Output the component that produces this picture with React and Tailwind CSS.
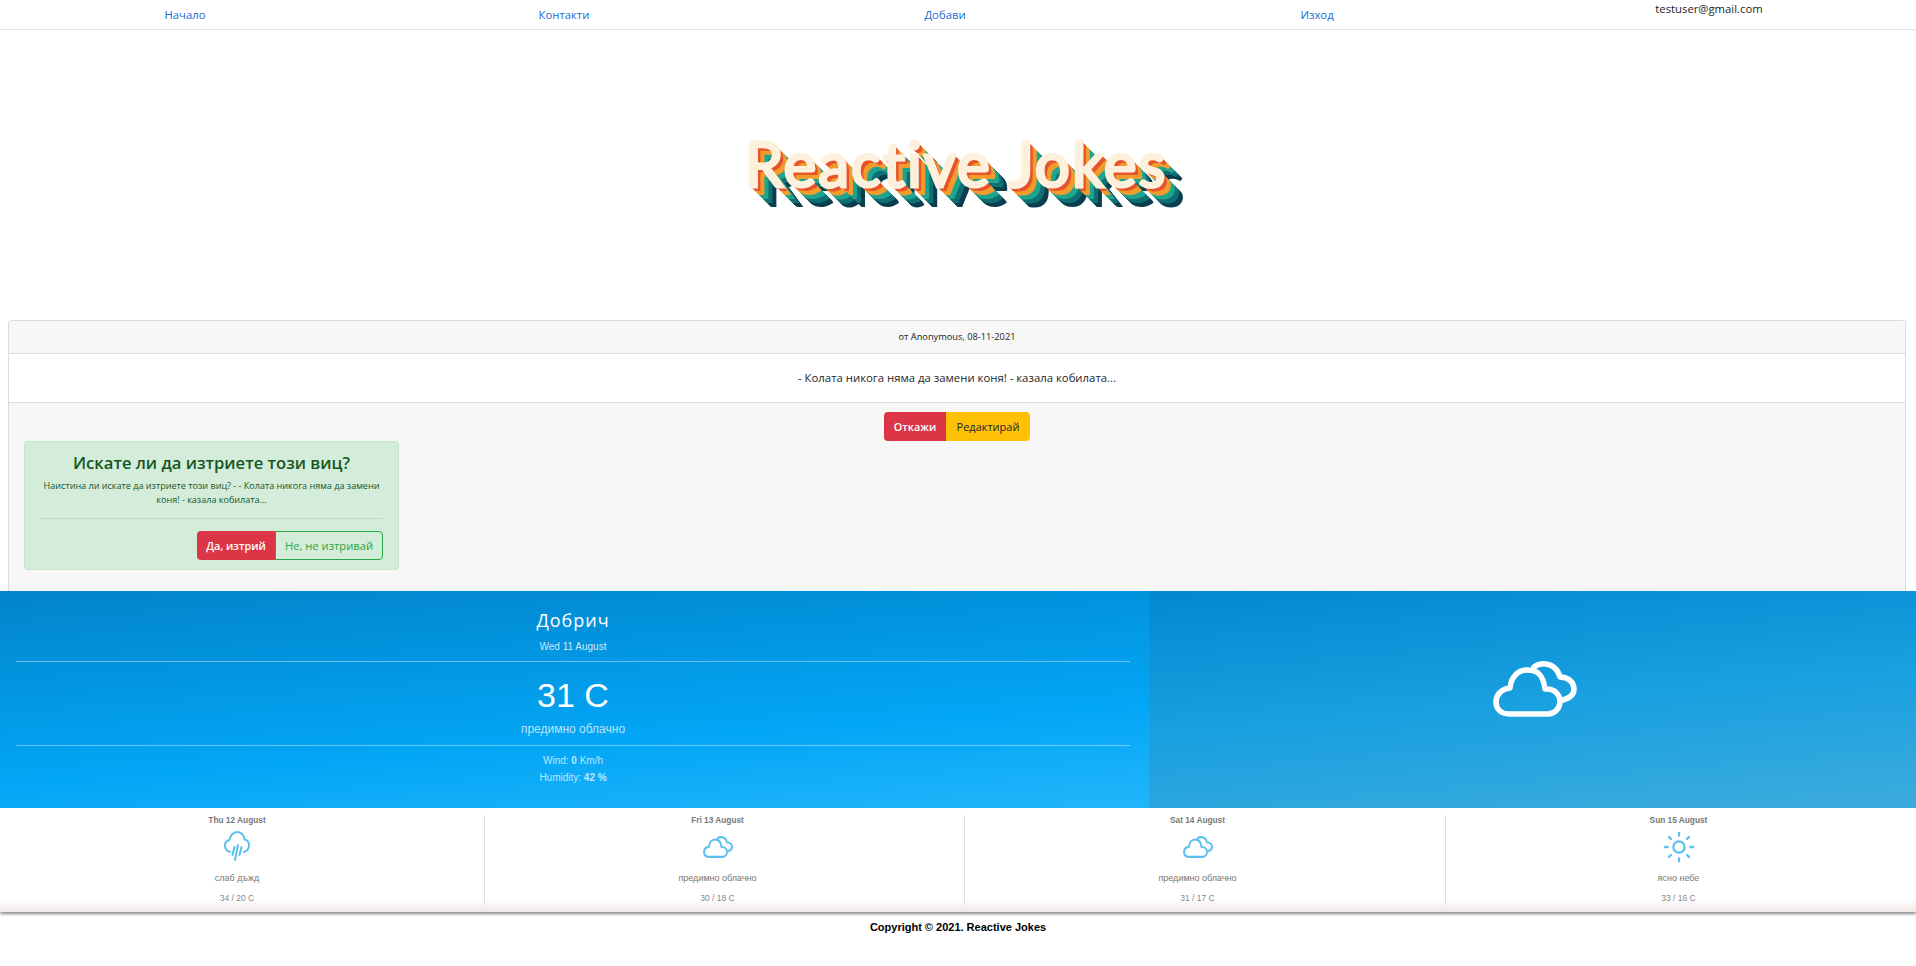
import { Sun } from "lucide-react";

const NAV = [
  { label: "Начало" },
  { label: "Контакти" },
  { label: "Добави" },
  { label: "Изход" },
];

const FORECAST = [
  { day: "Thu 12 August", icon: "rain", text: "слаб дъжд", temp: "34 / 20 C", cell: "mr-[5px]" },
  { day: "Fri 13 August", icon: "cloud", text: "предимно облачно", temp: "30 / 18 C", cell: "ml-[5px] mr-[8px] border-l border-[#ddd]" },
  { day: "Sat 14 August", icon: "cloud", text: "предимно облачно", temp: "31 / 17 C", cell: "ml-[6px] mr-[7px] border-l border-[#ddd]" },
  { day: "Sun 15 August", icon: "sun", text: "ясно небе", temp: "33 / 16 C", cell: "ml-[8px] mr-[5px] border-l border-[#ddd]" },
];

const Clouds = ({ className }) => (
  <svg viewBox="0 0 84 56" preserveAspectRatio="none" fill="none" stroke="currentColor" strokeWidth="5.500" strokeLinecap="round" strokeLinejoin="round" className={className}>
    <path d="M16 53h39c7 0 12-6 12-12.500S62 28 54 28h-2C50 13 44 9 34 9 25 9 18 16 17 27 8 28 3 34 3 41s5 12 13 12z" />
    <path d="M41 6c4-3 8-3.500 12-3 7 1 12 6 14 13 8 0 14 5 14 12 0 5-4 9-11 11" />
  </svg>
);

const RainCloud = ({ className }) => (
  <svg viewBox="0 0 26 32" fill="none" stroke="currentColor" strokeWidth="2" strokeLinecap="round" strokeLinejoin="round" className={className}>
    <path d="M6 21C3 20 1 17.500 1 14.500 1 11.500 3 9.500 5.500 9 6 4.500 9.500 1 13 1c4 0 7 3 7.500 7.500 3 .5 4.500 3 4.500 6 0 3-2 5.500-5 6.500" />
    <path d="M10.500 16l-2 8M14 14l-3 15M17.500 16l-2 8" />
  </svg>
);

const ForecastIcon = ({ icon }) => {
  if (icon === "rain") return <RainCloud className="w-[26px] h-[32px] text-[#5cc0ec]" />;
  if (icon === "sun") return <Sun size={34} strokeWidth={1.6} className="text-[#5cc0ec]" />;
  return <Clouds className="w-[30px] h-[22px] text-[#5cc0ec]" />;
};

export default function App() {
  return (
    <div className="min-h-[966px] bg-white font-['Open_Sans','Noto_Sans',sans-serif] text-[#212529]">
      {/* Nav */}
      <nav className="grid grid-cols-[370px_388px_374px_370px_414px] h-[30px] border-b border-[#dee2e6] text-[11.300px] leading-[18px]">
        {NAV.map((n) => (
          <a key={n.label} className="pt-[6px] text-center text-[#1a6ad8]">{n.label}</a>
        ))}
        <span className="text-center">testuser@gmail.com</span>
      </nav>

      {/* Logo */}
      <div className="h-[290px] flex items-start justify-center pt-[98px] pr-[4px]">
        <span className="font-['Lato',sans-serif] font-normal text-[62px] leading-[70px] tracking-[2px] text-[#fdf0dc] [-webkit-text-stroke:3px_#fdf0dc] [text-shadow:1px_1px_0_#e8532a,2px_2px_0_#e8532a,3px_3px_0_#e8532a,4px_4px_0_#e8532a,5px_5px_0_#f29c2e,6px_6px_0_#f29c2e,7px_7px_0_#f29c2e,8px_8px_0_#f29c2e,9px_9px_0_#1fa58e,10px_10px_0_#1fa58e,11px_11px_0_#1fa58e,12px_12px_0_#1fa58e,13px_13px_0_#0f7073,14px_14px_0_#0f7073,15px_15px_0_#0f7073,16px_16px_0_#0f7073,17px_17px_0_#0a3f50,18px_18px_0_#0a3f50,19px_19px_0_#0a3f50,20px_20px_0_#0a3f50]">
          Reactive Jokes
        </span>
      </div>

      {/* Joke card */}
      <div className="ml-2 mr-[10px] h-[271px] border border-[#dcdcdc] border-b-0 rounded-t-[4px] overflow-hidden text-center">
        <div className="h-[33px] bg-[#f7f7f7] border-b border-[#dcdcdc] text-[9.250px] leading-[32px]">от Anonymous, 08-11-2021</div>
        <div className="h-[49px] border-b border-[#dcdcdc] text-[11.350px] leading-[48px]">- Колата никога няма да замени коня! - казала кобилата...</div>
        <div className="h-[188px] bg-[#f7f7f7] px-[15px] pt-[9px]">
          <div className="flex justify-center">
            <button className="h-[29px] w-[62px] pt-[1px] bg-[#dc3545] text-white text-[10.800px] font-semibold rounded-l-[4px]">Откажи</button>
            <button className="h-[29px] w-[84px] pt-[1px] bg-[#ffc107] text-[#212529] text-[11px] rounded-r-[4px]">Редактирай</button>
          </div>
          <div className="w-[375px] h-[129px] bg-[#d4edda] border border-[#c3e6cb] rounded-[4px] px-[15px] pt-[8px] text-[#155724]">
            <h4 className="text-[16.600px] leading-[26px] font-semibold">Искате ли да изтриете този виц?</h4>
            <p className="mt-[3px] text-[9.050px] leading-[14px] pb-[11px] border-b border-[#b9dcc2]">
              Наистина ли искате да изтриете този виц? - - Колата никога няма да замени коня! - казала кобилата...
            </p>
            <div className="flex justify-end mt-[12px]">
              <button className="h-[29px] w-[78px] pt-[2px] bg-[#dc3545] text-white text-[10.800px] font-semibold rounded-l-[4px]">Да, изтрий</button>
              <button className="h-[29px] w-[108px] pt-[2px] border border-[#28a745] text-[#28a745] text-[11.200px] rounded-r-[4px]">Не, не изтривай</button>
            </div>
          </div>
        </div>
      </div>

      {/* Weather */}
      <div className="h-[217px] font-['Liberation_Sans',sans-serif] text-center text-white grid grid-cols-[1149px_1fr]">
        <div className="pl-4 pr-[19px] bg-[linear-gradient(176deg,#0284cb_0%,#03a6f6_65%,#22b6fb_100%)]">
          <div className="h-[71px] border-b border-[#ffffff66] pt-[16px]">
            <div className="font-['Open_Sans',sans-serif] text-[18px] leading-[26px] font-medium tracking-[1px]">Добрич</div>
            <div className="mt-[7px] text-[10px] leading-[14px] text-[#ffffffcc]">Wed 11 August</div>
          </div>
          <div className="h-[84px] border-b border-[#ffffff66] pt-[11px]">
            <div className="text-[34px] leading-[44px]">31 C</div>
            <div className="mt-[3px] text-[12px] leading-[18px] text-[#ffffffbb]">предимно облачно</div>
          </div>
          <div className="pt-[6px] text-[10px] leading-[17px] text-[#ffffffbb]">
            <div>Wind: <b>0</b> Km/h</div>
            <div>Humidity: <b>42 %</b></div>
          </div>
        </div>
        <div className="bg-[linear-gradient(175deg,#0388d0_0%,#18a0e0_50%,#3cabdd_100%)] flex items-start justify-center pt-[70px] pl-[4px]">
          <Clouds className="w-[84px] h-[56px] text-white" />
        </div>
      </div>

      {/* Forecast */}
      <div className="relative grid grid-cols-4 h-[104px] pt-[7px] bg-[linear-gradient(#fff_88%,#efe8e8)] shadow-[0_2px_3px_#888] font-['Liberation_Sans',sans-serif] text-center text-[#777]">
        {FORECAST.map((f) => (
          <div key={f.day} className={`h-[90px] ${f.cell}`}>
            <div className="text-[8.300px] leading-[11px] font-bold">{f.day}</div>
            <div className="h-[32px] mt-[5px] flex items-center justify-center"><ForecastIcon icon={f.icon} /></div>
            <div className="mt-[9px] text-[9px] leading-[12px]">{f.text}</div>
            <div className="mt-[8px] text-[8.500px] leading-[12px] text-[#888]">{f.temp}</div>
          </div>
        ))}
      </div>

      <footer className="pt-[7px] text-center font-['Liberation_Sans',sans-serif] text-[11px] leading-[16px] font-bold text-black">
        Copyright © 2021. Reactive Jokes
      </footer>
    </div>
  );
}
